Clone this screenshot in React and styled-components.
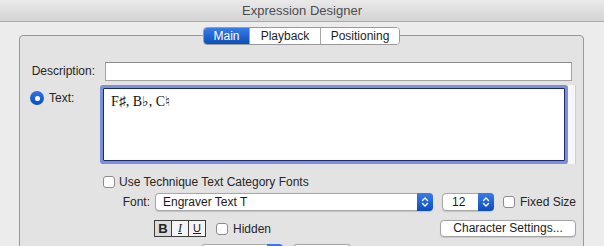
import styled, { createGlobalStyle } from "styled-components";

const GlobalStyle = createGlobalStyle`
    html, body {
        margin: 0;
        height: 246px;
        overflow: hidden;
        background: #ececec;
        font-family: "Liberation Sans", Arial, sans-serif;
        font-size: 12px;
        color: #262626;
    }
`;

const Window = styled.div`
    width: 604px;
    height: 246px;
    overflow: hidden;
    display: flex;
    flex-direction: column;
    background: #ececec;
`;

const TitleBar = styled.div`
    height: 21px;
    flex: none;
    line-height: 21px;
    text-align: center;
    font-size: 13px;
    color: #4d4d4d;
    background: linear-gradient(#e9e9e9, #d4d4d4);
    border-bottom: 1px solid #a9a9a9;
`;

const Group = styled.div`
    margin: 13px 20px 0 19px;
    border: 1px solid #999;
    border-radius: 4px;
    background: #e3e3e3;
    flex: none;
    height: 260px;
    display: flex;
    flex-direction: column;
`;

const Tabs = styled.div`
    align-self: center;
    margin-top: -9px;
    display: flex;
    height: 16px;
    border: 1px solid #9a9a9a;
    border-radius: 4px;
    overflow: hidden;
    background: #fff;
`;

const Tab = styled.div`
    width: ${(props) => props.$w}px;
    line-height: 16px;
    text-align: center;
    font-size: 12px;
    color: ${(props) => (props.$active ? "#fff" : "#1e1e1e")};
    background: ${(props) =>
        props.$active ? "linear-gradient(#3a7ce8, #0d4fb8)" : "#fff"};
    & + & {
        border-left: 1px solid #a6a6a6;
    }
`;

const Form = styled.div`
    margin-top: 17px;
    padding: 0 9px 0 10px;
    display: grid;
    grid-template-columns: 65px 1fr;
    column-gap: 10px;
    align-items: start;
`;

const Label = styled.div`
    text-align: right;
    line-height: 19px;
`;

const TextInput = styled.div`
    height: 17px;
    margin-right: 4px;
    background: #fff;
    border: 1px solid #a2a2a2;
    border-top-color: #8c8c8c;
`;

const RadioLabel = styled.div`
    display: flex;
    align-items: center;
    gap: 5px;
    margin-top: 10px;
    line-height: 14px;
`;

const Radio = styled.span`
    width: 14px;
    height: 14px;
    box-sizing: border-box;
    border-radius: 50%;
    background: linear-gradient(#2f74e6, #0b4fb9);
    display: flex;
    align-items: center;
    justify-content: center;
    &::after {
        content: "";
        width: 5px;
        height: 5px;
        border-radius: 50%;
        background: #fff;
    }
`;

const TextRow = styled.div`
    display: flex;
    margin-top: 7px;
    margin-left: -2px;
`;

const TextArea = styled.div`
    flex: 1;
    background: #fff;
    border: 1px solid #1c2a66;
    box-shadow: 0 0 0 3px #7b90da;
    border-radius: 1px;
    padding: 5px 7px;
    height: 61px;
    font-family: "Liberation Serif", "DejaVu Serif", serif;
    font-size: 14px;
    line-height: 16px;
    color: #111;
`;

const ScrollTrack = styled.div`
    width: 7px;
    height: 79px;
    margin: -3px 0 -3px 3px;
    background: #f7f7f7;
    border-right: 1px solid #cfcfcf;
`;

const Row = styled.div`
    grid-column: 2;
    display: flex;
    align-items: center;
    white-space: nowrap;
    margin-top: ${(props) => props.$top}px;
    padding-left: ${(props) => props.$indent || 0}px;
    height: ${(props) => props.$h}px;
`;

const Check = styled.span`
    width: 12px;
    height: 12px;
    box-sizing: border-box;
    flex: none;
    background: #fff;
    border: 1px solid #8d8d8d;
    border-radius: 3px;
    margin-left: ${(props) => props.$left || 0}px;
    margin-right: ${(props) => props.$gap || 5}px;
`;

const FieldLabel = styled.span`
    width: 45px;
    flex: none;
    text-align: right;
    margin-right: 5px;
`;

const Popup = styled.div`
    width: ${(props) => props.$w}px;
    height: 18px;
    flex: none;
    box-sizing: border-box;
    margin-right: ${(props) => props.$gap || 0}px;
    display: flex;
    align-items: stretch;
    background: #fff;
    border: 1px solid #a8a8a8;
    border-radius: 4px;
    box-shadow: 0 0.5px 1px rgba(0, 0, 0, 0.15);
`;

const PopupText = styled.span`
    flex: 1;
    padding-left: ${(props) => props.$pad || 7}px;
    line-height: 16px;
    font-size: 12px;
    color: #1c1c1c;
`;

const Stepper = styled.span`
    width: 16px;
    margin: -1px -1px -1px 0;
    border-radius: 0 4px 4px 0;
    background: linear-gradient(#3a7ce8, #0b4dba);
    display: flex;
    align-items: center;
    justify-content: center;
`;

const StyleButtons = styled.div`
    display: flex;
    flex: none;
    height: 17px;
    border: 1px solid #3d3d3d;
    box-sizing: border-box;
    margin-right: 10px;
    background: #f4f4f4;
`;

const StyleCell = styled.span`
    width: 16px;
    text-align: center;
    line-height: 15px;
    font-size: 12px;
    color: #222;
    background: ${(props) => (props.$on ? "#dcdcdc" : "transparent")};
    & + & {
        border-left: 1px solid #3d3d3d;
    }
`;

const Bold = styled(StyleCell)`
    font-weight: bold;
    font-size: 13px;
`;

const Italic = styled(StyleCell)`
    font-family: "Liberation Serif", serif;
    font-style: italic;
    text-decoration: underline;
    text-underline-offset: 1px;
`;

const Under = styled(StyleCell)`
    font-size: 11px;
    text-decoration: underline;
`;

const PushButton = styled.div`
    width: ${(props) => props.$w}px;
    height: ${(props) => props.$h || 17}px;
    flex: none;
    box-sizing: border-box;
    margin-left: ${(props) => props.$left || "0"};
    background: #fff;
    border: 1px solid #a3a3a3;
    border-radius: 4px;
    box-shadow: 0 0.5px 1px rgba(0, 0, 0, 0.12);
    text-align: center;
    line-height: 15px;
    font-size: 12px;
    color: #1c1c1c;
`;

function Chevrons() {
    return (
        <svg width="8" height="12" viewBox="0 0 8 12">
            <path
                d="M1.5 4.5 L4 2 L6.5 4.5 M1.5 7.5 L4 10 L6.5 7.5"
                fill="none"
                stroke="#fff"
                strokeWidth="1.4"
                strokeLinecap="round"
                strokeLinejoin="round"
            />
        </svg>
    );
}

function App() {
    return (
        <>
            <GlobalStyle />
            <Window>
                <TitleBar>Expression Designer</TitleBar>
                <Group>
                    <Tabs>
                        <Tab $w={45} $active>Main</Tab>
                        <Tab $w={70}>Playback</Tab>
                        <Tab $w={78}>Positioning</Tab>
                    </Tabs>
                    <Form>
                        <Label>Description:</Label>
                        <TextInput />

                        <RadioLabel>
                            <Radio />
                            Text:
                        </RadioLabel>
                        <TextRow>
                            <TextArea>F♯, B♭, C♮</TextArea>
                            <ScrollTrack />
                        </TextRow>

                        <Row $top={14} $h={14}>
                            <Check $left={-2} $gap={4} />
                            Use Technique Text Category Fonts
                        </Row>

                        <Row $top={4} $h={18}>
                            <FieldLabel>Font:</FieldLabel>
                            <Popup $w={278} $gap={9}>
                                <PopupText>Engraver Text T</PopupText>
                                <Stepper><Chevrons /></Stepper>
                            </Popup>
                            <Popup $w={52} $gap={9}>
                                <PopupText $pad={9}>12</PopupText>
                                <Stepper><Chevrons /></Stepper>
                            </Popup>
                            <Check />
                            Fixed Size
                        </Row>

                        <Row $top={9} $h={17} $indent={49}>
                            <StyleButtons>
                                <Bold $on>B</Bold>
                                <Italic>I</Italic>
                                <Under>U</Under>
                            </StyleButtons>
                            <Check />
                            Hidden
                            <PushButton $w={136} $left="auto">
                                Character Settings...
                            </PushButton>
                        </Row>

                        <Row $top={7} $h={18} $indent={96}>
                            <Popup $w={82} $gap={10}>
                                <PopupText />
                                <Stepper><Chevrons /></Stepper>
                            </Popup>
                            <PushButton $w={58} $h={18} />
                        </Row>
                    </Form>
                </Group>
            </Window>
        </>
    );
}

export default App;
